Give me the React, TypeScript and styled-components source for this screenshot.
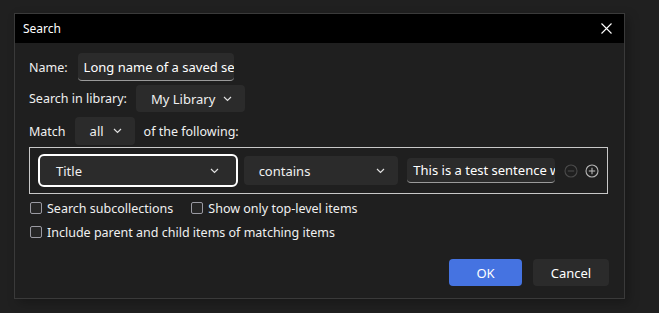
import React from 'react'
import styled, { createGlobalStyle } from 'styled-components'

const GlobalStyle = createGlobalStyle`
  html, body {
    margin: 0;
    padding: 0;
    background: #202020;
  }
  body {
    font-family: 'Noto Sans', 'Open Sans', sans-serif;
    color: #f0f0f0;
  }
`

const FONT = '12.5px'

const Page = styled.div`
  width: 659px;
  height: 313px;
  padding: 13px 0 0 14px;
  box-sizing: border-box;
`

const Dialog = styled.div`
  width: 611px;
  height: 286px;
  box-sizing: border-box;
  border: 1px solid #3a3a3a;
  background: #1f1f1f;
  display: flex;
  flex-direction: column;
  box-shadow: 4px 4px 10px rgba(0, 0, 0, 0.25);
`

const TitleBar = styled.div`
  height: 29px;
  background: #000;
  display: flex;
  align-items: center;
  justify-content: space-between;
  padding: 0 10px 0 8px;
  font-size: 12px;
  color: #fff;
`

const CloseButton = styled.button`
  width: 16px;
  height: 16px;
  padding: 0;
  border: 0;
  background: none;
  display: flex;
  align-items: center;
  justify-content: center;
  cursor: pointer;
`

const Body = styled.div`
  flex: 1;
  display: flex;
  flex-direction: column;
  padding: 10px 14px 12px 14px;
`

const Row = styled.div<{ $gap?: number; $mt?: number }>`
  display: flex;
  align-items: center;
  gap: ${({ $gap }) => $gap ?? 8}px;
  margin-top: ${({ $mt }) => $mt ?? 0}px;
  font-size: ${FONT};
`

const Label = styled.span`
  font-size: ${FONT};
  color: #f0f0f0;
  white-space: nowrap;
`

const TextInput = styled.div<{ $w: number; $h: number; $ml?: number }>`
  width: ${({ $w }) => $w}px;
  height: ${({ $h }) => $h}px;
  margin-left: ${({ $ml }) => $ml ?? 0}px;
  box-sizing: border-box;
  background: #2b2b2b;
  border-radius: 4px;
  border-bottom: 1px solid #9a9a9a;
  padding: 0 6px;
  display: flex;
  align-items: center;
  overflow: hidden;
  white-space: nowrap;
  font-size: 13px;
  color: #fff;
`

const Select = styled.div<{ $w: number; $h: number; $focus?: boolean; $pad?: number }>`
  width: ${({ $w }) => $w}px;
  height: ${({ $h }) => $h}px;
  box-sizing: border-box;
  background: #2b2b2b;
  border-radius: ${({ $focus }) => ($focus ? 6 : 4)}px;
  border: ${({ $focus }) => ($focus ? '2px solid #fff' : '0')};
  padding: 0 ${({ $focus }) => ($focus ? 17 : 13)}px 0 ${({ $pad }) => $pad ?? 15}px;
  display: flex;
  align-items: center;
  justify-content: space-between;
  font-size: 13px;
  color: #f0f0f0;
`

const ConditionBox = styled.div`
  margin-top: 2px;
  height: 47px;
  width: 579px;
  box-sizing: border-box;
  border: 1px solid #c8c8c8;
  display: flex;
  align-items: center;
  gap: 6px;
  padding: 0 8px;
`

const IconGroup = styled.div`
  display: flex;
  align-items: center;
  gap: 7px;
  margin-left: 3px;
`

const CheckRow = styled.label<{ $mt: number }>`
  display: flex;
  align-items: center;
  gap: 17px;
  margin-top: ${({ $mt }) => $mt}px;
  height: 18px;
`

const CheckItem = styled.span`
  display: flex;
  align-items: center;
  gap: 5px;
  font-size: ${FONT};
  color: #f0f0f0;
`

const Box = styled.span`
  width: 12px;
  height: 12px;
  box-sizing: border-box;
  border: 1.5px solid #9a9aa2;
  border-radius: 2px;
  background: #262626;
  margin-left: 1px;
`

const Footer = styled.div`
  margin-top: auto;
  display: flex;
  justify-content: flex-end;
  gap: 11px;
  padding-right: 1px;
`

const Button = styled.button<{ $primary?: boolean; $w: number }>`
  width: ${({ $w }) => $w}px;
  height: 27px;
  border: 0;
  border-radius: 4px;
  background: ${({ $primary }) => ($primary ? '#4573e1' : '#2b2b2b')};
  color: #fff;
  font-family: 'Noto Sans', 'Open Sans', sans-serif;
  font-size: 13px;
  padding: 0;
`

const Chevron = () => (
  <svg width="9" height="6" viewBox="0 0 9 6">
    <path d="M1 1l3.5 3.5L8 1" fill="none" stroke="#e0e0e0" strokeWidth="1.2" />
  </svg>
)

const CircleIcon = ({ plus, color }: { plus?: boolean; color: string }) => (
  <svg width="14" height="14" viewBox="0 0 14 14">
    <circle cx="7" cy="7" r="6" fill="none" stroke={color} strokeWidth="1.1" />
    <path d="M3.8 7h6.4" stroke={color} strokeWidth="1.1" />
    {plus && <path d="M7 3.8v6.4" stroke={color} strokeWidth="1.1" />}
  </svg>
)

export default function App() {
  return (
    <Page>
      <GlobalStyle />
      <Dialog>
        <TitleBar>
          <span>Search</span>
          <CloseButton>
            <svg width="11" height="11" viewBox="0 0 11 11">
              <path d="M0.5 0.5l10 10M10.5 0.5l-10 10" stroke="#fff" strokeWidth="1.1" />
            </svg>
          </CloseButton>
        </TitleBar>
        <Body>
          <Row $gap={10}>
            <Label>Name:</Label>
            <TextInput $w={156} $h={28}>Long name of a saved search</TextInput>
          </Row>
          <Row $mt={4} $gap={9}>
            <Label>Search in library:</Label>
            <Select $w={109} $h={27}>
              <span>My Library</span>
              <Chevron />
            </Select>
          </Row>
          <Row $mt={5} $gap={9}>
            <Label>Match</Label>
            <Select $w={60} $h={28} $pad={15}>
              <span>all</span>
              <Chevron />
            </Select>
            <Label>of the following:</Label>
          </Row>
          <ConditionBox>
            <Select $w={200} $h={33} $focus $pad={16}>
              <span>Title</span>
              <Chevron />
            </Select>
            <Select $w={155} $h={29}>
              <span>contains</span>
              <Chevron />
            </Select>
            <TextInput $w={148} $h={25} $ml={3}>
              This is a test sentence with more words
            </TextInput>
            <IconGroup>
              <CircleIcon color="#4a4a4a" />
              <CircleIcon plus color="#b4b4b4" />
            </IconGroup>
          </ConditionBox>
          <CheckRow $mt={5}>
            <CheckItem>
              <Box />
              Search subcollections
            </CheckItem>
            <CheckItem>
              <Box />
              Show only top-level items
            </CheckItem>
          </CheckRow>
          <CheckRow $mt={6}>
            <CheckItem>
              <Box />
              Include parent and child items of matching items
            </CheckItem>
          </CheckRow>
          <Footer>
            <Button $primary $w={73}>OK</Button>
            <Button $w={76}>Cancel</Button>
          </Footer>
        </Body>
      </Dialog>
    </Page>
  )
}
